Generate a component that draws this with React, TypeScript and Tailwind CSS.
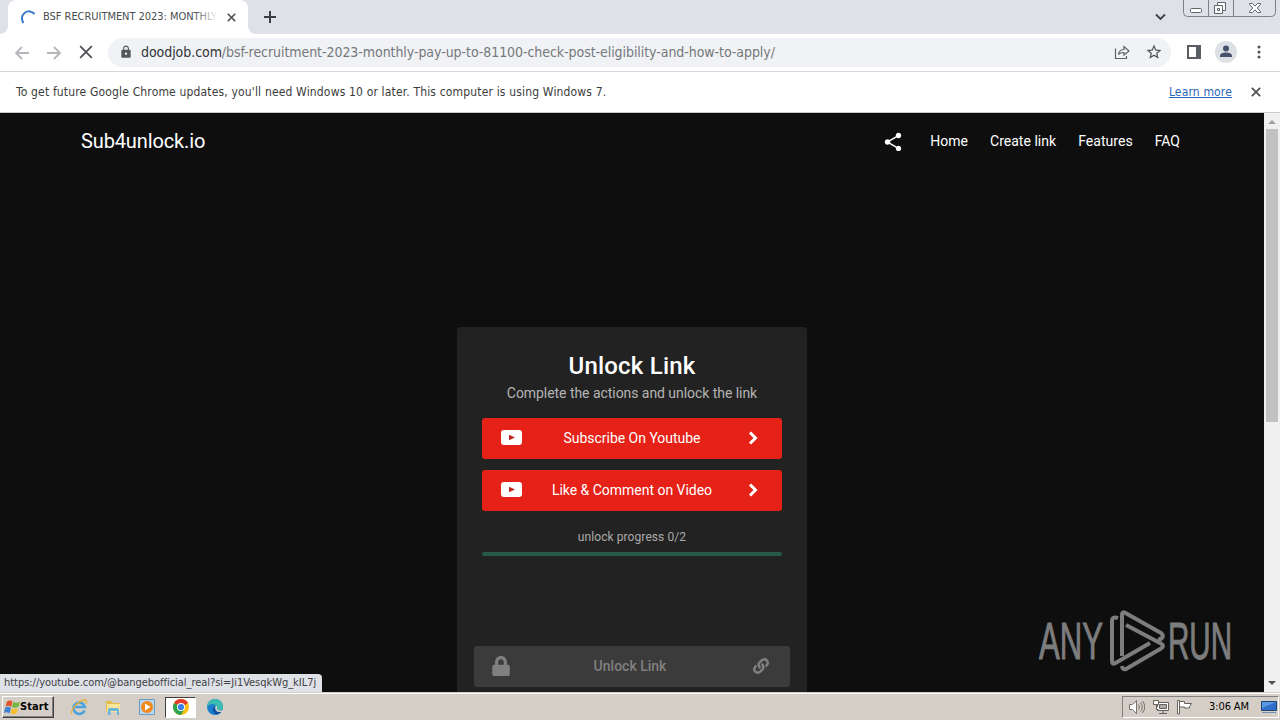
import type { ReactNode } from "react";
import { FaLink, FaLock } from "react-icons/fa";
import { MdLock, MdShare, MdStarBorder } from "react-icons/md";

const links = ["Home", "Create link", "Features", "FAQ"];
const actions = ["Subscribe On Youtube", "Like & Comment on Video"];

function Cross({ size, width = 1.8 }: { size: number; width?: number }) {
  return (
    <svg width={size} height={size} viewBox="0 0 12 12" stroke="#4c4f53" strokeWidth={width} fill="none">
      <path d="M1 1l10 10M11 1L1 11" />
    </svg>
  );
}

function TabStrip() {
  return (
    <div className="flex h-[34px] bg-[#dee1e8] pl-2">
      <div className="relative flex h-full w-[240px] items-center rounded-t-lg bg-white pl-3 pr-[11px]">
        <svg className="absolute -left-2 bottom-0" width="8" height="8" fill="#fff">
          <path d="M8 0v8H0a8 8 0 0 0 8-8z" />
        </svg>
        <svg className="absolute -right-2 bottom-0" width="8" height="8" fill="#fff">
          <path d="M0 0v8h8a8 8 0 0 1-8-8z" />
        </svg>
        <svg width="16" height="16" viewBox="0 0 16 16" fill="none" stroke="#3d7cc9" strokeWidth="2">
          <path d="M3.500 14A7 7 0 0 1 14.600 5" />
        </svg>
        <div className="relative ml-[7px] w-[175px] overflow-hidden whitespace-nowrap text-[11px] tracking-[-0.04px] text-[#4a4d51]">
          BSF RECRUITMENT 2023: MONTHLY
          <div className="absolute inset-y-0 right-0 w-6 bg-linear-to-r from-white/0 to-white" />
        </div>
        <div className="ml-auto mr-px">
          <Cross size={9} width={2.2} />
        </div>
      </div>
      <svg className="ml-4 mt-[11px]" width="12" height="12" stroke="#3c4043" strokeWidth="2">
        <path d="M6 0v12M0 6h12" />
      </svg>
      <svg className="ml-auto mt-[13px]" width="11" height="8" fill="none" stroke="#3c4043" strokeWidth="1.800">
        <path d="M1 1.500l4.500 4.500L10 1.500" />
      </svg>
      <svg className="ml-[17px] mr-[3px]" width="94" height="18" fill="none" stroke="#7d8189">
        <path d="M.5 0v12.500q0 4 4 4h84q4 0 4-4V0M25.500 0v16M50.500 0v16" />
        <g stroke="#5f636a" fill="#fff">
          <rect x="7.500" y="8.500" width="11" height="4" rx="1" />
          <path d="M34.500 2.500h8v8h-3v3h-8v-8h3z" />
          <path d="M34.500 8.500h2v2h-2zM34.500 5.500h5v5" fill="none" />
          <path d="M66.500 3.500h3l2.500 2.700 2.500-2.700h3v1l-3.300 3.500 3.300 3.500v1h-3L72 9.800l-2.500 2.700h-3v-1L69.800 8l-3.300-3.500z" />
        </g>
      </svg>
    </div>
  );
}

function Toolbar() {
  return (
    <div className="flex h-[38px] items-center border-b border-[#d5d7da] bg-white">
      <svg className="ml-[15px]" width="14" height="14" fill="none" stroke="#b5b7ba" strokeWidth="1.800">
        <path d="M14 7H1.500M7 1L1 7l6 6" />
      </svg>
      <svg className="ml-[18px]" width="14" height="14" fill="none" stroke="#b5b7ba" strokeWidth="1.800">
        <path d="M0 7h12.500M7 1l6 6-6 6" />
      </svg>
      <div className="-mt-px ml-[18px]">
        <Cross size={14} width={1.5} />
      </div>
      <div className="ml-[15px] flex h-[29px] w-[1063px] items-center rounded-full bg-[#f0f2f5] pl-[11px]">
        <MdLock className="-mt-0.5" size={14} color="#54575b" />
        <p className="ml-2 whitespace-nowrap text-[14px] tracking-[-0.06px] text-[#75787c]">
          <span className="text-[#303338]">doodjob.com</span>
          /bsf-recruitment-2023-monthly-pay-up-to-81100-check-post-eligibility-and-how-to-apply/
        </p>
        <svg className="-mt-0.5 ml-auto" width="16" height="16" fill="none" stroke="#5f6368" strokeWidth="1.200">
          <path d="M1.500 4.500v10h11V12M4.500 10.500c.5-3.500 2.500-5 5.500-5V2.500L15 7l-5 4V8.500c-3 0-4.500.5-5.500 2z" />
        </svg>
        <MdStarBorder className="-mt-px ml-[15px] mr-[8px]" size={18} color="#4e5256" />
      </div>
      <svg className="-mt-0.5 ml-4" width="14" height="14" fill="none">
        <path d="M1 1h12v12H1z" stroke="#5a5d61" strokeWidth="2" />
        <path d="M9 0h5v14H9z" fill="#5a5d61" />
      </svg>
      <svg className="-mt-0.5 ml-[14px]" width="22" height="22">
        <circle cx="11" cy="11" r="11" fill="#dde0e5" />
        <circle cx="11" cy="7.500" r="3" fill="#46526c" />
        <path d="M5 16v-1c0-2.500 3-3.500 6-3.500s6 1 6 3.500v1z" fill="#46526c" />
      </svg>
      <svg className="-mt-px ml-5" width="4" height="14" fill="#4e5256">
        <circle cx="2" cy="2" r="1.500" />
        <circle cx="2" cy="7" r="1.500" />
        <circle cx="2" cy="12" r="1.500" />
      </svg>
    </div>
  );
}

function InfoBar() {
  return (
    <div className="flex h-[41px] items-center border-b border-[#c9cbcd] bg-white pl-4 pr-[19px] text-[12px] text-[#3c3c3c]">
      <p className="tracking-[0.163px]">
        To get future Google Chrome updates, you'll need Windows 10 or later. This computer is using Windows 7.
      </p>
      <a className="ml-auto mr-[19px] tracking-[0.16px] text-[#2a66b8] underline">Learn more</a>
      <Cross size={10} width={2} />
    </div>
  );
}

function YoutubeIcon() {
  return (
    <svg className="-mt-0.5" width="21" height="15" viewBox="0 0 21 15">
      <rect width="21" height="15" rx="3" fill="#fff" />
      <path d="M8 4.800v5.400l6-2.700z" fill="#c3261c" />
    </svg>
  );
}

function AnyRun() {
  return (
    <svg className="absolute left-[1036px] top-[495px]" width="200" height="66" fill="none">
      <g fill="#7d7d7d" stroke="#7d7d7d" strokeWidth="1" fontFamily="'Liberation Sans', Arial, sans-serif" fontSize="51">
        <text transform="translate(3 50.500) scale(.61 1)">ANY</text>
        <text transform="translate(132 50.500) scale(.58 1)">RUN</text>
      </g>
      <g stroke="#7d7d7d" strokeWidth="4" strokeLinejoin="round">
        <path d="M82 10q-6-2-6 3V53q0 4 3.500 2L114 35" />
        <path d="M86 48V7q0-4 3.500-2L125 25q3 2.500 1 5-1.500 1.500-4 .5" />
        <path d="M90 17l35 18.500q4 2.500 0 5L90 61q-3.500 1-4-3" />
      </g>
    </svg>
  );
}

function Page() {
  return (
    <div className="relative flex h-[579px] overflow-hidden bg-[#0e0e0e] font-['Roboto',sans-serif] text-white">
      <div className="w-[1264px]">
        <nav className="flex h-[57px] items-center pl-[81px] pr-[84px]">
          <span className="-mt-px text-[20px] tracking-[-0.13px]">Sub4unlock.io</span>
          <MdShare className="ml-auto mr-[26px] mt-px" size={22} />
          <div className="flex gap-[22px] text-[14px] tracking-[0.03px]">
            {links.map((link) => (
              <a key={link}>{link}</a>
            ))}
          </div>
        </nav>
        <div className="mx-auto mt-[157px] h-[400px] w-[350px] rounded-t bg-[#222] px-[25px] pt-[21px] text-center">
          <h1 className="text-[24px] font-medium leading-9 tracking-[0.2px]">Unlock Link</h1>
          <p className="-mt-px text-[14px] leading-5 tracking-[-0.05px] text-[#b5b5b5]">
            Complete the actions and unlock the link
          </p>
          <div className="mt-[15px] flex flex-col gap-[11px]">
            {actions.map((action) => (
              <button
                key={action}
                className="flex h-[41px] items-center rounded-[3px] bg-[#e62117] pl-[19px] pr-[23px] text-[14px] tracking-[-0.02px]"
              >
                <YoutubeIcon />
                <span className="ml-[-8px] grow pl-[2px]">{action}</span>
                <svg className="-mt-px" width="11" height="14" fill="none" stroke="#fff" strokeWidth="3">
                  <path d="M2 1.500L7.500 7 2 12.500" />
                </svg>
              </button>
            ))}
          </div>
          <p className="mt-[16px] text-[12px] leading-5 tracking-[0.08px] text-[#aaa]">unlock progress 0/2</p>
          <div className="mt-[5px] h-1 rounded-full bg-[#265a46]" />
          <button className="-mx-2 mt-[90px] flex h-[41px] w-[316px] items-center rounded-[3px] bg-[#3b3b3b] pl-[17px] pr-[21px] text-[14px] font-medium text-[#808080]">
            <FaLock className="-mt-px" size={20} />
            <span className="-ml-1 grow">Unlock Link</span>
            <FaLink className="-mt-px" size={16} />
          </button>
        </div>
      </div>
      <div className="flex w-4 flex-col items-center bg-[#f0f0f0]">
        <svg width="16" height="16" fill="#a0a0a0">
          <path d="M4 11l4-4 4 4z" />
        </svg>
        <div className="h-[293px] w-3 bg-[#c1c1c1]" />
        <svg className="mt-auto" width="16" height="16" fill="#505050">
          <path d="M4 5l4 4 4-4z" />
        </svg>
      </div>
      <AnyRun />
      <div className="absolute bottom-0 left-0 flex h-[18px] w-[322px] items-center whitespace-nowrap rounded-tr bg-[#dee1e6] pl-1 font-['DejaVu_Sans_Condensed','DejaVu_Sans',sans-serif] text-[11px] tracking-[-0.035px] text-[#3f4246]">
        https://youtube.com/@bangebofficial_real?si=Ji1VesqkWg_kIL7j
      </div>
    </div>
  );
}

function TaskItem({ active, children }: { active?: boolean; children: ReactNode }) {
  return (
    <div
      className={
        active
          ? "flex h-[21px] w-[31px] items-center justify-center border border-b-white border-l-[#404040] border-r-white border-t-[#404040] bg-white"
          : "flex h-[21px] w-[31px] items-center justify-center"
      }
    >
      {children}
    </div>
  );
}

function Taskbar() {
  return (
    <div className="flex h-7 items-center border-t border-[#d4d0c8] bg-[#d4cec6] pt-px text-black shadow-[inset_0_1px_0_#fff]">
      <div className="ml-[2px] flex h-[22px] w-[52px] items-center border border-b-[#404040] border-l-white border-r-[#404040] border-t-white pl-px shadow-[inset_-1px_-1px_0_#808080]">
        <svg width="16" height="16" className="shrink-0">
          <path d="M3 2.500q3-2 5.500 0L7.300 8Q5 6 1.500 7.500z" fill="#e5532d" />
          <path d="M9.300 3q3 1.500 6.700 0L14.300 8Q11 9.500 8 8z" fill="#74b843" />
          <path d="M1.300 8.500q3-1.500 5.700.5L5.500 14.500q-2.500-2-5.500-.5z" fill="#3d83cf" />
          <path d="M7.900 9q3 1.700 6.100.3L12.500 14.500q-3 1.500-6-.3z" fill="#f6bd2c" />
        </svg>
        <span className="text-[11px] font-bold tracking-[0.1px]">Start</span>
      </div>
      <div className="ml-[9px] flex gap-[3px]">
        <TaskItem>
          <svg width="18" height="18" fill="none">
            <path d="M14.500 12.500a5.700 5.700 0 1 1 .3-3.500H5" stroke="#4ba3dc" strokeWidth="2.600" />
            <path d="M2 16C-1 14 8 2 15 2q2.500 0 1 3.500" stroke="#e3b33a" strokeWidth="1.300" />
          </svg>
        </TaskItem>
        <TaskItem>
          <svg width="16" height="16">
            <path d="M1 2h6l1 2h7v9H1z" fill="#e6bd55" />
            <path d="M2 5h13v8H2z" fill="#f8e39a" />
            <path d="M3 16v-5q0-2 2-2h7q2 0 2 2v5h-2v-4H5.500v4z" fill="#69b5dc" />
          </svg>
        </TaskItem>
        <TaskItem>
          <svg width="16" height="16">
            <path d="M.5.500h15v15H.5z" fill="#b8d7ee" stroke="#6a9ec5" />
            <circle cx="8" cy="8" r="6" fill="#f28a1c" />
            <path d="M6 4.500v7L11.500 8z" fill="#fff" />
          </svg>
        </TaskItem>
        <TaskItem active>
          <svg width="16" height="16">
            <circle cx="8" cy="8" r="8" fill="#fbc116" />
            <path d="M8 8L1.070 4A8 8 0 0 1 14.930 4z" fill="#e33b2e" />
            <path d="M8 8L1.070 4A8 8 0 0 0 8 16l3.500-6z" fill="#2da44e" />
            <path d="M8 4h6.930L8 8z" fill="#e33b2e" />
            <circle cx="8" cy="8" r="4" fill="#fff" />
            <circle cx="8" cy="8" r="3.100" fill="#3b7ded" />
          </svg>
        </TaskItem>
        <TaskItem>
          <svg width="16" height="16">
            <circle cx="8" cy="8" r="8" fill="#1b7fce" />
            <path d="M0 8A8 8 0 0 1 16 8q0 3-4 3.200-3-.2-2-2.200Q9 5 5 5 2 5 0 8z" fill="#3cbdb0" />
            <path d="M6 9q-1 5 4 6.500 3-.5 5-3.500-6 2-7-1.500L9.500 9Q9 6 6 9z" fill="#0f4f9e" />
            <path d="M8 9q0-2 1.500-2.200 1 .7.500 2.200-1 2.500 4.500 2.500L16 11v1.500q-5 1.500-7-1z" fill="#d4cec6" />
          </svg>
        </TaskItem>
      </div>
      <div className="ml-auto mr-px flex h-[22px] w-[157px] items-center border border-b-white border-l-[#808080] border-r-white border-t-[#808080] pl-[6px]">
        <svg width="16" height="16" fill="#fff" stroke="#77736c">
          <path d="M.5 5.500h3l4-4v13l-4-4h-3z" />
          <path d="M9.500 5.500q2 2.500 0 5M11.500 3.500q3.500 4.500 0 9M13.500 2q4.500 6 0 12" fill="none" />
        </svg>
        <svg className="ml-2" width="16" height="16" fill="#fff" stroke="#65625c">
          <path d="M4.500 3.500h11v8h-11z" />
          <path d="M6.500 5.500h7v4h-7z" fill="#aaa" />
          <path d="M10 12v2M6 14.500h8M.5 1.500h5v4h-5zM3.500 5.500v5h2" />
        </svg>
        <svg className="ml-2" width="16" height="16" fill="#fff" stroke="#65625c">
          <path d="M.5 15V1.500h2V15zM2.500 2.500h5v2h7l-2 3v1.500h-5v-1h-5z" />
        </svg>
        <span className="ml-[16px] whitespace-nowrap text-[11px] tracking-[-0.1px]">3:06 AM</span>
        <svg className="ml-auto mr-px" width="16" height="14">
          <path d="M.5 1.500h15v9H.5z" fill="#2f6fc9" stroke="#1d4479" />
          <path d="M1 2h14L1 8z" fill="#5b9ae0" />
          <path d="M1 12.500h14" stroke="#7390b3" />
        </svg>
      </div>
    </div>
  );
}

export default function App() {
  return (
    <div className="h-[720px] w-[1280px] overflow-hidden font-['DejaVu_Sans_Condensed','DejaVu_Sans',sans-serif]">
      <TabStrip />
      <Toolbar />
      <InfoBar />
      <Page />
      <Taskbar />
    </div>
  );
}
